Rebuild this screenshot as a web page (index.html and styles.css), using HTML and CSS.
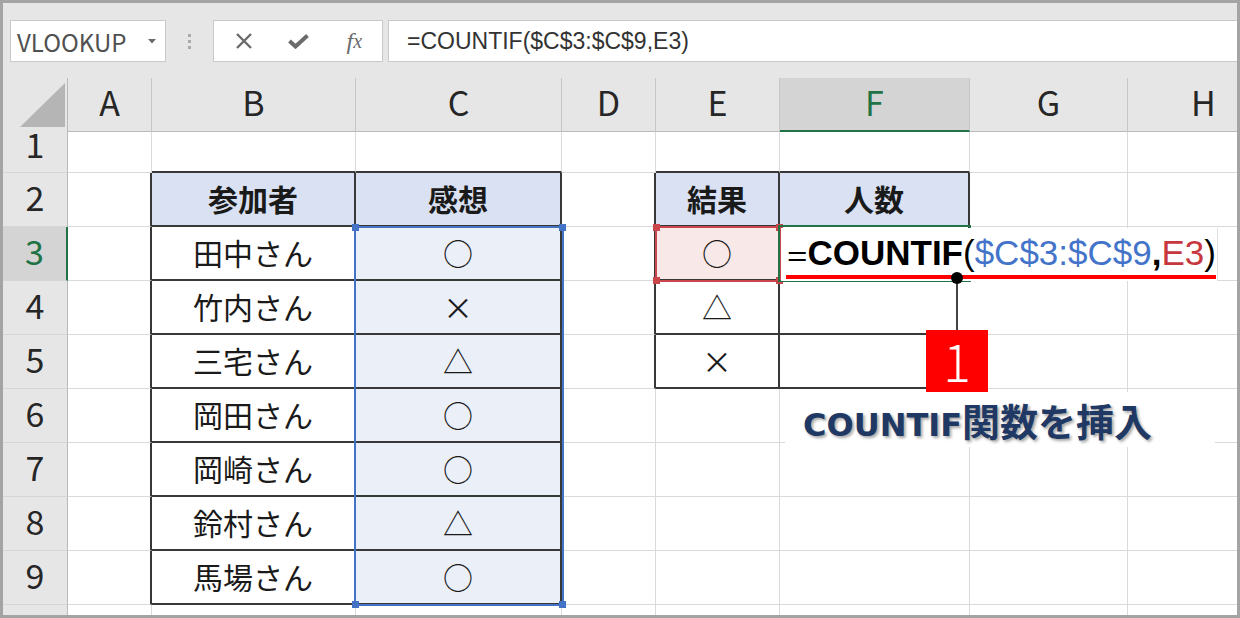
FILE: index.html
```html
<!DOCTYPE html>
<html>
<head>
	<title>COUNTIF</title>
	<link rel="stylesheet" href="styles.css">
</head>
<body>
	<div class="window">
		<div class="toolbar">
			<div class="namebox">
				<span>VLOOKUP</span>
				<svg width="8" height="5" viewBox="0 0 8 5"><polygon points="0,0 8,0 4,4.5" fill="#6a6a6a"/></svg>
			</div>
			<div class="grip"><i></i><i></i><i></i></div>
			<div class="btnbox">
				<span class="slot">
					<svg width="18" height="16" viewBox="0 0 18 16"><path d="M2 1 L16 15 M16 1 L2 15" stroke="#6b6b6b" stroke-width="2.4" fill="none"/></svg>
				</span>
				<span class="slot">
					<svg width="21" height="15" viewBox="0 0 21 15"><path d="M1.5 7 L7.5 12.5 L19.5 1.5" stroke="#6b6b6b" stroke-width="4" fill="none"/></svg>
				</span>
				<span class="slot fx"><i>f</i><i>x</i></span>
			</div>
			<div class="formula">=COUNTIF($C$3:$C$9,E3)</div>
		</div>

		<div class="sheet">
			<div class="grid">
				<div class="corner"><svg width="46" height="45" viewBox="0 0 46 45"><polygon points="46,0 46,45 0,45" fill="#b5b5b5"/></svg></div>
				<div class="ch">A</div><div class="ch">B</div><div class="ch">C</div><div class="ch">D</div>
				<div class="ch">E</div><div class="ch sel">F</div><div class="ch">G</div><div class="ch">H</div>

				<div class="rh r1">1</div><div class="c"></div><div class="c bt"></div><div class="c bt"></div><div class="c"></div>
				<div class="c bt"></div><div class="c bt"></div><div class="c"></div><div class="c"></div>

				<div class="rh">2</div><div class="c br"></div><div class="c hd">参加者</div><div class="c hd">感想</div><div class="c br"></div>
				<div class="c hd">結果</div><div class="c hd">人数</div><div class="c"></div><div class="c"></div>

				<div class="rh sel">3</div><div class="c br"></div><div class="c tb">田中さん</div><div class="c tb rng">○</div><div class="c br"></div>
				<div class="c tb ref">○</div><div class="c tb"></div><div class="c"></div><div class="c"></div>

				<div class="rh">4</div><div class="c br"></div><div class="c tb">竹内さん</div><div class="c tb rng">×</div><div class="c br"></div>
				<div class="c tb">△</div><div class="c tb open"></div><div class="c"></div><div class="c"></div>

				<div class="rh">5</div><div class="c br"></div><div class="c tb">三宅さん</div><div class="c tb rng">△</div><div class="c br"></div>
				<div class="c tb">×</div><div class="c tb"></div><div class="c"></div><div class="c"></div>

				<div class="rh">6</div><div class="c br"></div><div class="c tb">岡田さん</div><div class="c tb rng">○</div><div class="c"></div>
				<div class="c"></div><div class="c"></div><div class="c"></div><div class="c"></div>

				<div class="rh">7</div><div class="c br"></div><div class="c tb">岡崎さん</div><div class="c tb rng">○</div><div class="c"></div>
				<div class="c"></div><div class="c"></div><div class="c"></div><div class="c"></div>

				<div class="rh">8</div><div class="c br"></div><div class="c tb">鈴村さん</div><div class="c tb rng">△</div><div class="c"></div>
				<div class="c"></div><div class="c"></div><div class="c"></div><div class="c"></div>

				<div class="rh">9</div><div class="c br"></div><div class="c tb">馬場さん</div><div class="c tb rng">○</div><div class="c"></div>
				<div class="c"></div><div class="c"></div><div class="c"></div><div class="c"></div>

				<div class="rh"></div><div class="c"></div><div class="c"></div><div class="c"></div><div class="c"></div>
				<div class="c"></div><div class="c"></div><div class="c"></div><div class="c"></div>
			</div>

			<!-- edit mode highlights -->
			<div class="hl hl-blue">
				<i class="h tl"></i><i class="h tr"></i><i class="h bl"></i><i class="h bR"></i>
			</div>
			<div class="hl hl-red">
				<i class="h tl"></i><i class="h tr"></i><i class="h bl"></i><i class="h bR"></i>
			</div>
			<div class="active"></div>
			<div class="edit">
				<span class="eq">=</span><span class="k">COUNTIF</span><span class="p">(</span><span class="blue">$C$3:$C$9</span><span class="k">,</span><span class="red">E3</span><span class="p">)</span>
			</div>

			<!-- callout -->
			<div class="underline"></div>
			<div class="leader"></div>
			<div class="dot"></div>
			<div class="badge">1</div>
			<div class="note">COUNTIF<span class="jp">関数を挿入</span></div>
		</div>
	</div>
</body>
</html>
```

FILE: styles.css
```css
html {
  box-sizing: border-box;
}

*, *::before, *::after {
  box-sizing: inherit;
  margin: 0;
  padding: 0;
}

body {
  font-family: "Noto Sans CJK JP", sans-serif;
  background: #fff;
}

.window {
  width: 1240px;
  height: 618px;
  border: 3px solid #a4a4a4;
  overflow: hidden;
  background: #fff;
}

/* formula bar */
.toolbar {
  height: 75px;
  background: #e6e6e6;
  display: flex;
  align-items: flex-start;
  padding: 17px 0 0 7px;
}

.namebox {
  width: 156px;
  height: 42px;
  border: 1px solid #c9c9c9;
  background: #fff;
  display: flex;
  align-items: center;
  justify-content: space-between;
  padding: 0 9px 0 6px;
  font-size: 24px;
  color: #505050;
}

.grip {
  width: 47px;
  height: 42px;
  display: flex;
  flex-direction: column;
  align-items: center;
  justify-content: center;
  gap: 3px;
}

.grip i {
  width: 3px;
  height: 3px;
  background: #ababab;
}

.btnbox {
  width: 170px;
  height: 42px;
  border: 1px solid #c9c9c9;
  background: #fff;
  display: flex;
  align-items: center;
  padding-left: 2px;
}

.slot {
  width: 55.5px;
  display: flex;
  justify-content: center;
  align-items: center;
}

.fx {
  font-family: "Liberation Serif", serif;
  font-style: italic;
  font-size: 24px;
  color: #6b6b6b;
}

.fx i:last-child {
  font-size: 20px;
}

.formula {
  flex: 1;
  margin-left: 5px;
  height: 42px;
  border: 1px solid #c9c9c9;
  border-right: none;
  background: #fff;
  padding-left: 18px;
  font-family: "Liberation Sans", sans-serif;
  font-size: 23px;
  line-height: 40px;
  color: #333;
}

/* sheet */
.sheet {
  position: relative;
}

.grid {
  display: grid;
  grid-template-columns: 65px 84px 204px 206px 94px 124px 190px 158px 152px;
  grid-template-rows: 54px 41px repeat(8, 54px) 20px;
}

.corner, .ch, .rh, .c {
  display: flex;
  align-items: center;
  justify-content: center;
}

.corner {
  background: #e6e6e6;
  border-right: 1px solid #bababa;
  border-bottom: 1px solid #bababa;
  align-items: flex-end;
  justify-content: flex-end;
  padding: 0 2px 3px 0;
}

.ch, .rh {
  background: #e6e6e6;
  font-size: 34px;
  color: #262626;
  padding-bottom: 6px;
}

.ch {
  border-right: 1px solid #c6c6c6;
  border-bottom: 1px solid #bababa;
}

.ch.sel {
  background: #d4d4d4;
  color: #217346;
  border-bottom: 2px solid #217346;
}

.rh {
  border-right: 1px solid #bababa;
  border-bottom: 1px solid #d6d6d6;
}

.rh.r1 {
  align-items: flex-start;
  line-height: 1;
  padding: 0;
  margin-top: -5px;
}

.rh.sel {
  background: #d4d4d4;
  color: #217346;
  border-right: 2px solid #217346;
}

.c {
  border-right: 1px solid #dadada;
  border-bottom: 1px solid #dadada;
  font-size: 30px;
  color: #1a1a1a;
  padding-bottom: 2px;
}

.c.bt {
  border-bottom: 2px solid #383838;
}

.c.br {
  border-right: 2px solid #383838;
}

.c.hd, .c.tb {
  border-right: 2px solid #383838;
  border-bottom: 2px solid #383838;
}

.c.hd {
  background: #d9e1f2;
  font-weight: 700;
}

.c.rng {
  background: #eaeff8;
}

.c.ref {
  background: #f9e8e8;
}

.c.open {
  border-right-color: #fff;
}

/* range highlights */
.hl {
  position: absolute;
  border: 2px solid;
}

.hl-blue {
  left: 351px;
  top: 148px;
  width: 210px;
  height: 380px;
  border-color: #4472c4;
}

.hl-red {
  left: 652px;
  top: 148px;
  width: 126px;
  height: 56px;
  border-color: #c9474c;
}

.h {
  position: absolute;
  width: 7px;
  height: 7px;
}

.hl-blue .h {
  background: #4472c4;
}

.hl-red .h {
  background: #c9474c;
}

.h.tl { left: -4px; top: -4px; }
.h.tr { right: -4px; top: -4px; }
.h.bl { left: -4px; bottom: -4px; }
.h.bR { right: -4px; bottom: -4px; }

.active {
  position: absolute;
  left: 775px;
  top: 147px;
  width: 193px;
  height: 57px;
  border: 2px solid #217346;
}

.edit {
  position: absolute;
  left: 778px;
  top: 150px;
  width: 437px;
  height: 53px;
  background: #fff;
  border-right: 1px solid #e0e0e0;
  padding-left: 6px;
  font-family: "Liberation Sans", sans-serif;
  font-size: 35px;
  line-height: 50px;
  color: #000;
  white-space: nowrap;
}

.edit .eq {
  display: inline-block;
  transform: translateY(3px) scaleY(0.8);
}

.edit .k {
  font-weight: 700;
}

.edit .blue {
  color: #4474c9;
}

.edit .red {
  color: #c6383e;
}

/* callout */
.underline {
  position: absolute;
  left: 783px;
  top: 197px;
  width: 430px;
  height: 4px;
  background: #ff0000;
}

.leader {
  position: absolute;
  left: 953px;
  top: 200px;
  width: 1.5px;
  height: 52px;
  background: #444;
}

.dot {
  position: absolute;
  left: 948px;
  top: 194px;
  width: 12px;
  height: 12px;
  border-radius: 50%;
  background: #000;
}

.badge {
  position: absolute;
  left: 923px;
  top: 252px;
  width: 62px;
  height: 62px;
  background: #ff0000;
  color: #fff;
  font-size: 52px;
  font-weight: 300;
  line-height: 60px;
  text-align: center;
}

.note {
  position: absolute;
  left: 782px;
  top: 314px;
  width: 430px;
  height: 55px;
  background: #fff;
  padding-left: 18px;
  font-family: "DejaVu Sans", "Noto Sans CJK JP", sans-serif;
  font-weight: 700;
  font-size: 32px;
  line-height: 55px;
  color: #203864;
  text-shadow: 2px 2px 3px rgba(0, 0, 0, 0.35);
  white-space: nowrap;
}

.note .jp {
  font-family: "Noto Sans CJK JP", sans-serif;
  font-size: 38px;
}
```
